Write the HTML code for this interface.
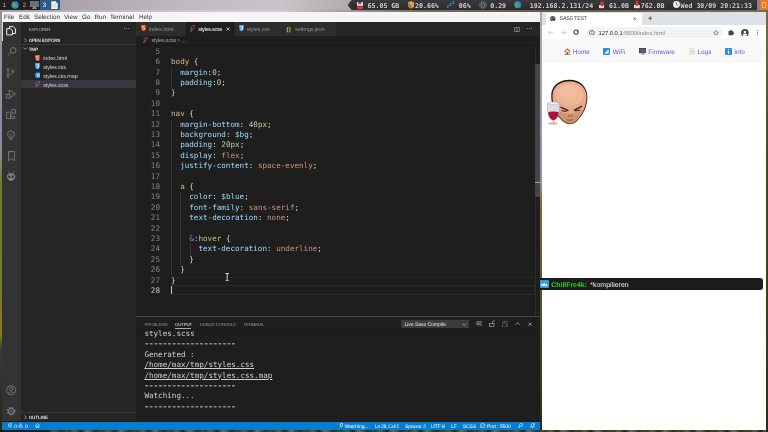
<!DOCTYPE html>
<html><head><meta charset="utf-8"><title>SASS TEST</title>
<style>
*{box-sizing:border-box;margin:0;padding:0}
html,body{text-rendering:geometricPrecision;width:768px;height:432px;overflow:hidden;background:#23260f;font-family:"Liberation Sans",sans-serif}
#root{position:absolute;left:0;top:0;width:768px;height:432px;overflow:hidden;will-change:transform}
.a{position:absolute}
.t{white-space:pre}
.m{font-family:"Liberation Mono",monospace}
.d{font-family:"DejaVu Sans Mono","Liberation Mono",monospace}
.b{font-weight:bold}
.ln{position:absolute;left:136px;width:404px;height:10.4px;line-height:10.4px;white-space:pre;font:7.6px "DejaVu Sans Mono","Liberation Mono",monospace;color:#d4d4d4}
.ln i{position:absolute;left:0;width:24px;text-align:right;color:#858585;font-style:normal;line-height:10.4px}
.ln b{position:absolute;left:35px;font-weight:normal;line-height:10.4px}
.sel{color:#d7ba7d}.pr{color:#9cdcfe}.nu{color:#b5cea8}.va{color:#ce9178}.kw{color:#569cd6}
#out,.ol{left:144.4px;font:7.6px "DejaVu Sans Mono","Liberation Mono",monospace;color:#d0d0d0;line-height:10.4px;white-space:pre}
#out u,.ol u{text-decoration:underline;text-underline-offset:1px;text-decoration-thickness:.6px}
</style></head><body>
<div id="root">
<div class="a" style="left:0px;top:0px;width:768px;height:432px;background:linear-gradient(180deg,#8d8590 0,#9a92a0 30px,#8f88a0 150px,#6f7a2e 185px,#7a7a28 300px,#8a7a22 335px,#3a3a34 350px,#2c2e22 400px,#23280f 432px);"></div>
<div class="a" style="left:0px;top:429.8px;width:768px;height:2.2px;background:linear-gradient(90deg,#15170c 0,#1c1f10 40px,rgba(0,0,0,0) 60px),repeating-linear-gradient(90deg,#333a22 0,#55603e 7px,#22281a 13px,#687254 19px,#2b3220 27px,#444c30 34px);"></div>
<div class="a" style="left:766px;top:11px;width:2px;height:421px;background:linear-gradient(180deg,#7a6a4a 0,#4a4a22 120px,#3a3c1c 300px,#2a2c14 421px);"></div>
<div class="a" style="left:0px;top:0px;width:768px;height:11.5px;background:linear-gradient(90deg,#9c929c 0,#aaa0aa 60px,#c2bac2 190px,#cac3c9 280px,#b2aaae 350px,#9a9298 768px);"></div>
<div class="a" style="left:0px;top:9.8px;width:768px;height:1.9px;background:linear-gradient(90deg,#a79da7 0,#b8aeb8 60px,#cfc8cf 190px,#d2ccd1 280px,#a09a98 350px,#7a6c5c 420px,#6a5a48 540px,#7a6a58 768px);"></div>
<div class="a" style="left:0px;top:0px;width:19.5px;height:9.6px;background:#1f1f21;"></div>
<span class="a t m" style="left:2.4px;top:-1px;font-size:6.6px;line-height:13.2px;color:#a8a8a8;">1</span>
<div class="a" style="left:20px;top:0px;width:19.5px;height:9.6px;background:#1f1f21;"></div>
<span class="a t m" style="left:22.4px;top:-1px;font-size:6.6px;line-height:13.2px;color:#a8a8a8;">2</span>
<div class="a" style="left:40px;top:0px;width:19.5px;height:9.6px;background:#2c5b8a;"></div>
<span class="a t m" style="left:42.4px;top:-1px;font-size:6.6px;line-height:13.2px;color:#f0f0f0;">3</span>
<svg class="a" style="left:10.5px;top:0.8px;" width="8" height="8" viewBox="0 0 8 8"><circle cx="4" cy="4" r="3.7" fill="#2f7fd0"/><path d="M2 1.5l2.5.5 1 2-1.5 1.5-1 2-1.5-2.5z" fill="#4fb04a"/><path d="M5.5 4.5l1.5.3-.6 1.8-1.2.4z" fill="#4fb04a"/></svg>
<svg class="a" style="left:30px;top:1px;" width="9" height="8" viewBox="0 0 9 8"><rect x=".5" y=".5" width="8" height="5.2" fill="#6a7076" stroke="#8a9096" stroke-width=".6"/><rect x="3.4" y="5.7" width="2.2" height="1.2" fill="#9a9a9a"/><rect x="2.2" y="6.8" width="4.6" height=".9" fill="#b0b0b0"/></svg>
<svg class="a" style="left:50.5px;top:0.8px;" width="7" height="8.4" viewBox="0 0 7 8.4"><path d="M.3.3h4.2l2.2 2.2v5.6H.3z" fill="#f4f4f0"/><path d="M4.5.3v2.2h2.2z" fill="#c9c9c0"/><path d="M1.3 3.6h4M1.3 4.8h4M1.3 6h4" stroke="#b8b8c8" stroke-width=".5"/></svg>
<div class="a" style="left:347.5px;top:0px;width:409.5px;height:10px;background:linear-gradient(180deg,#39383b,#2c2b2e);clip-path:polygon(4.2px 0,100% 0,100% 100%,4.2px 100%,0 50%)"></div>
<span class="a t d" style="left:367.5px;top:0px;font-size:6.6px;line-height:13.2px;color:#d2d2d2;font-weight:bold">65.05 GB</span>
<span class="a t d" style="left:415px;top:0px;font-size:6.6px;line-height:13.2px;color:#d2d2d2;font-weight:bold">20.66%</span>
<span class="a t d" style="left:458.7px;top:0px;font-size:6.6px;line-height:13.2px;color:#d2d2d2;font-weight:bold">06%</span>
<span class="a t d" style="left:490.2px;top:0px;font-size:6.6px;line-height:13.2px;color:#d2d2d2;font-weight:bold">0.29</span>
<span class="a t d" style="left:529.7px;top:0px;font-size:6.6px;line-height:13.2px;color:#d2d2d2;font-weight:bold">192.168.2.131/24</span>
<span class="a t d" style="left:609px;top:0px;font-size:6.6px;line-height:13.2px;color:#d2d2d2;font-weight:bold">61.0B</span>
<span class="a t d" style="left:640.7px;top:0px;font-size:6.6px;line-height:13.2px;color:#d2d2d2;font-weight:bold">762.0B</span>
<span class="a t d" style="left:680.5px;top:0px;font-size:6.6px;line-height:13.2px;color:#d2d2d2;font-weight:bold">Wed 30/09 20:21:33</span>
<svg class="a" style="left:356.7px;top:1.6px;" width="6" height="7" viewBox="0 0 6 7"><rect x="0" y="0" width="6" height="7" rx=".6" fill="#e8e8f0"/><rect x="0" y="3.6" width="6" height="3.4" fill="#d8304a"/><rect x="1.2" y="0" width="3.2" height="2.2" fill="#8a4a5a"/></svg>
<svg class="a" style="left:408px;top:1.4px;" width="6.4" height="7.4" viewBox="0 0 6.4 7.4"><path d="M3.2 0l3.2 1.6v4.2L3.2 7.4 0 5.8V1.6z" fill="#d89a54"/><path d="M3.2 3.2v4.2L0 5.8V1.6z" fill="#b87838"/><path d="M0 1.6l3.2 1.6 3.2-1.6" stroke="#f0c890" stroke-width=".5" fill="none"/></svg>
<span class="a t " style="left:446.4px;top:2px;font-size:5.6px;line-height:11.2px;color:#3f8ad8;font-weight:bold">z</span>
<span class="a t " style="left:449px;top:0px;font-size:5.6px;line-height:11.2px;color:#3f8ad8;font-weight:bold">z</span>
<span class="a t " style="left:451.8px;top:-2px;font-size:5.6px;line-height:11.2px;color:#3f8ad8;font-weight:bold">z</span>
<svg class="a" style="left:478.5px;top:1px;" width="8" height="8" viewBox="0 0 8 8"><circle cx="4" cy="4" r="3.100" fill="none" stroke="#6a7479" stroke-width="1.500" stroke-dasharray="1.200 .8"/><circle cx="4" cy="4" r="2.400" fill="#626c71"/><circle cx="4" cy="4" r="1" fill="#343336"/></svg>
<svg class="a" style="left:514px;top:1px;" width="7.4" height="7.4" viewBox="0 0 7.4 7.4"><circle cx="3.7" cy="3.7" r="3.6" fill="#2f7fd0"/><path d="M1.6 1.4l2.4.5 1 1.8-1.4 1.4-1 2-1.4-2.4z" fill="#4fb04a"/><path d="M5.2 4.2l1.4.3-.6 1.6-1.1.4z" fill="#4fb04a"/></svg>
<svg class="a" style="left:598.5px;top:1.4px;" width="5.8" height="7.2" viewBox="0 0 5.8 7.2"><rect x="0" y="4" width="5.8" height="3.2" fill="#e8d8d0"/><path d="M2.9 0l2.7 3H3.9v2.4H1.9V3H.2z" fill="#e03a2a"/></svg>
<svg class="a" style="left:634px;top:1.4px;" width="5.8" height="7.2" viewBox="0 0 5.8 7.2"><rect x="0" y="4" width="5.8" height="3.2" fill="#e8d8d0"/><path d="M2.9 5.4l2.7-3H3.9V0H1.9v2.4H.2z" fill="#e03a2a"/></svg>
<svg class="a" style="left:673px;top:1.3px;" width="7" height="7" viewBox="0 0 7 7"><circle cx="3.5" cy="3.5" r="3.4" fill="#f0f0f0"/><path d="M3.5 1.2v2.5l1.6.9" stroke="#555" stroke-width=".7" fill="none"/></svg>
<div class="a" style="left:757px;top:0px;width:3px;height:10px;background:#8a8288;"></div>
<div class="a" style="left:759.8px;top:0px;width:8.2px;height:10.4px;background:#e47a2c;"><div class='a' style='left:2.4px;top:2.2px;width:3.4px;height:5.4px;border:0.8px solid #f6b070'></div></div>
<div class="a" style="left:2px;top:11.7px;width:538.3px;height:10.5px;background:#f5f5f5;"></div>
<span class="a t " style="left:4px;top:12px;font-size:6.3px;line-height:12.6px;color:#303030;">File</span>
<span class="a t " style="left:19px;top:12px;font-size:6.3px;line-height:12.6px;color:#303030;">Edit</span>
<span class="a t " style="left:34px;top:12px;font-size:6.3px;line-height:12.6px;color:#303030;">Selection</span>
<span class="a t " style="left:64px;top:12px;font-size:6.3px;line-height:12.6px;color:#303030;">View</span>
<span class="a t " style="left:82px;top:12px;font-size:6.3px;line-height:12.6px;color:#303030;">Go</span>
<span class="a t " style="left:94.5px;top:12px;font-size:6.3px;line-height:12.6px;color:#303030;">Run</span>
<span class="a t " style="left:110px;top:12px;font-size:6.3px;line-height:12.6px;color:#303030;">Terminal</span>
<span class="a t " style="left:139px;top:12px;font-size:6.3px;line-height:12.6px;color:#303030;">Help</span>
<div class="a" style="left:2px;top:22px;width:538.3px;height:408px;background:#1e1e1e;"></div>
<div class="a" style="left:2px;top:22px;width:19px;height:399.3px;background:#333333;"></div>
<div class="a" style="left:2px;top:22px;width:1px;height:18.5px;background:#d8d8d8;"></div>
<div class="a" style="left:21px;top:22px;width:115px;height:399.3px;background:#252526;"></div>
<div class="a" style="left:136px;top:22px;width:404.3px;height:13.5px;background:#252526;"></div>
<span class="a t " style="left:28.7px;top:26px;font-size:4.4px;line-height:8.8px;color:#bdbdbd;letter-spacing:-.3px">EXPLORER</span>
<div class="a" style="left:123.6px;top:28.3px;width:1px;height:1px;background:#a0a0a0;border-radius:50%"></div>
<div class="a" style="left:125.69999999999999px;top:28.3px;width:1px;height:1px;background:#a0a0a0;border-radius:50%"></div>
<div class="a" style="left:127.8px;top:28.3px;width:1px;height:1px;background:#a0a0a0;border-radius:50%"></div>
<svg class="a" style="left:24px;top:37.8px;" width="3" height="4.6" viewBox="0 0 3 4.6"><path d="M.6.5l1.8 1.8L.6 4.1" stroke="#c5c5c5" stroke-width=".7" fill="none"/></svg>
<span class="a t " style="left:28.7px;top:36px;font-size:4.6px;line-height:9.2px;color:#dcdcdc;font-weight:bold;letter-spacing:-.27px">OPEN EDITORS</span>
<div class="a" style="left:21px;top:44.2px;width:115px;height:0.6px;background:#3a3a3c;"></div>
<svg class="a" style="left:23px;top:47.3px;" width="4.6" height="3.2" viewBox="0 0 4.6 3.2"><path d="M.5.6l1.8 1.8L4.1.6" stroke="#c5c5c5" stroke-width=".7" fill="none"/></svg>
<span class="a t " style="left:28.7px;top:45px;font-size:4.6px;line-height:9.2px;color:#dcdcdc;font-weight:bold;letter-spacing:-.15px">TMP</span>
<div class="a" style="left:21px;top:79.7px;width:115px;height:8px;background:#37373d;"></div>
<span class="a t " style="left:43.2px;top:54px;font-size:5.5px;line-height:11.0px;color:#d0d0d0;letter-spacing:-.12px">index.html</span>
<span class="a t " style="left:43.2px;top:63px;font-size:5.5px;line-height:11.0px;color:#d0d0d0;letter-spacing:-.12px">styles.css</span>
<span class="a t " style="left:43.2px;top:72px;font-size:5.5px;line-height:11.0px;color:#d0d0d0;letter-spacing:-.12px">styles.css.map</span>
<span class="a t " style="left:43.2px;top:81px;font-size:5.5px;line-height:11.0px;color:#d0d0d0;letter-spacing:-.12px">styles.scss</span>
<svg class="a" style="left:35px;top:54.6px;" width="5" height="6.2" viewBox="0 0 5 6.2"><path d="M0 0h5l-.5 5.2L2.5 6.2.5 5.2z" fill="#e44d26"/><path d="M1.3 1.3h2.4M1.3 1.3l.15 1.6h2.1l-.2 1.7-.85.3-.85-.3" stroke="#fff" stroke-width=".6" fill="none"/></svg>
<svg class="a" style="left:35px;top:63.4px;" width="5" height="6.2" viewBox="0 0 5 6.2"><path d="M0 0h5l-.5 5.2L2.5 6.2.5 5.2z" fill="#42a5f5"/><path d="M1.3 1.3h2.4l-.2 3.3-1 .4-1-.4M1.4 2.9h2.1" stroke="#fff" stroke-width=".6" fill="none"/></svg>
<svg class="a" style="left:34.6px;top:72.2px;" width="5.8" height="6.4" viewBox="0 0 5.8 6.4"><circle cx="2.9" cy="3.2" r="2.9" fill="#3f8fd8"/><rect x="2" y="1.6" width="2.6" height="3.2" fill="#9ad0ff"/></svg>
<svg class="a" style="left:34.8px;top:80.6px;" width="5.6" height="6.6" viewBox="0 0 5.6 6.6"><path d="M1.6 4.2C.2 2.8 2.2.6 4 .5c1.4-.1 1.5 1.2.6 2.2-.9 1-2.2 1.3-2.6 2.2-.4.9-.2 1.6-1 1.5-.8-.1-.4-1.4.6-2.2z" stroke="#ec5f93" stroke-width=".7" fill="none"/></svg>
<div class="a" style="left:21px;top:412.3px;width:115px;height:0.6px;background:#3a3a3c;"></div>
<svg class="a" style="left:24px;top:415.2px;" width="3" height="4.6" viewBox="0 0 3 4.6"><path d="M.6.5l1.8 1.8L.6 4.1" stroke="#c5c5c5" stroke-width=".7" fill="none"/></svg>
<span class="a t " style="left:28.7px;top:413px;font-size:4.6px;line-height:9.2px;color:#dcdcdc;font-weight:bold;letter-spacing:-.15px">OUTLINE</span>
<svg class="a" style="left:6.2px;top:26.2px;" width="10.2" height="9.6" viewBox="0 0 10.2 9.6"><path d="M3.4 2.2V.6h3.8l2.3 2.3v4.6H6.6" stroke="#fff" stroke-width=".9" fill="none"/><path d="M.7 2.6h3.6l2.2 2.2v4.1H.7z" stroke="#fff" stroke-width=".9" fill="none"/></svg>
<svg class="a" style="left:6.6px;top:47.3px;" width="10" height="9.4" viewBox="0 0 10 9.4"><circle cx="6.2" cy="3.4" r="2.8" stroke="#808080" stroke-width=".9" fill="none"/><path d="M4.2 5.5L.6 8.9" stroke="#808080" stroke-width=".9"/></svg>
<svg class="a" style="left:6.4px;top:67.8px;" width="9" height="10.2" viewBox="0 0 9 10.2"><circle cx="2" cy="1.6" r="1.1" stroke="#808080" stroke-width=".8" fill="none"/><circle cx="2" cy="8.4" r="1.1" stroke="#808080" stroke-width=".8" fill="none"/><circle cx="7" cy="3.2" r="1.1" stroke="#808080" stroke-width=".8" fill="none"/><path d="M2 2.7v4.6M7 4.3C7 6 2.6 5.8 2.2 7.3" stroke="#808080" stroke-width=".8" fill="none"/></svg>
<svg class="a" style="left:6px;top:88.8px;" width="10.4" height="10" viewBox="0 0 10.4 10"><path d="M3.2 1l6.2 4-6.2 4z" stroke="#808080" stroke-width=".85" fill="none"/><rect x=".6" y="5.6" width="3.4" height="3.4" fill="#333" stroke="#808080" stroke-width=".8"/></svg>
<svg class="a" style="left:6px;top:109.4px;" width="10.4" height="10" viewBox="0 0 10.4 10"><path d="M.6 3.2h4v4h4v2.3H.6zM4.6 5.2V9.5" stroke="#808080" stroke-width=".8" fill="none"/><path d="M.6 6.4h8" stroke="#808080" stroke-width=".0" fill="none"/><rect x="6" y=".6" width="3.6" height="3.6" stroke="#808080" stroke-width=".8" fill="none"/></svg>
<svg class="a" style="left:6.4px;top:130px;" width="10" height="10" viewBox="0 0 10 10"><circle cx="5" cy="4.2" r="3.4" stroke="#808080" stroke-width=".8" fill="none"/><path d="M3.5 4.2l1.1 1.1 2-2.1M5 7.6v1.6M3.4 9.3h3.2" stroke="#808080" stroke-width=".8" fill="none"/></svg>
<svg class="a" style="left:7.6px;top:150.6px;" width="7.6" height="10.6" viewBox="0 0 7.6 10.6"><path d="M.6.6h6.2v9.2L3.7 7.4.6 9.8z" stroke="#808080" stroke-width=".9" fill="none"/></svg>
<svg class="a" style="left:6.4px;top:171.4px;" width="10" height="10.4" viewBox="0 0 10 10.4"><path d="M5 2.2c2.6 0 4.2 1.4 4.2 3.4S7 10 5 10 .8 7.600.8 5.600 2.400 2.200 5 2.200z" fill="#808080"/><ellipse cx="3.3" cy="5.800" rx="1.100" ry="1.500" fill="#333" transform="rotate(-25 3.300 5.800)"/><ellipse cx="6.700" cy="5.800" rx="1.100" ry="1.500" fill="#333" transform="rotate(25 6.700 5.800)"/><path d="M3.200 2.400L2.200.5M6.800 2.400L7.800.5" stroke="#808080" stroke-width=".7"/></svg>
<svg class="a" style="left:6.2px;top:385.4px;" width="10.4" height="10.4" viewBox="0 0 10.4 10.4"><circle cx="5.2" cy="5.2" r="4.6" stroke="#808080" stroke-width=".8" fill="none"/><circle cx="5.2" cy="3.900" r="1.700" stroke="#808080" stroke-width=".8" fill="none"/><path d="M2.100 8.500c.6-2 5.600-2 6.200 0" stroke="#808080" stroke-width=".8" fill="none"/></svg>
<svg class="a" style="left:6.2px;top:406.2px;" width="10.4" height="10.4" viewBox="0 0 10.4 10.4"><circle cx="5.2" cy="5.2" r="3.400" stroke="#808080" stroke-width="1.800" stroke-dasharray="1.500 1.170" fill="none"/><circle cx="5.2" cy="5.2" r="2.900" stroke="#808080" stroke-width=".8" fill="none"/><circle cx="5.2" cy="5.2" r="1.200" stroke="#808080" stroke-width=".7" fill="none"/></svg>
<div class="a" style="left:136px;top:22px;width:49px;height:13.5px;background:#2d2d2d;"></div>
<div class="a" style="left:185.3px;top:22px;width:48.7px;height:13.8px;background:#1e1e1e;"></div>
<div class="a" style="left:234.3px;top:22px;width:101.5px;height:13.5px;background:#2d2d2d;"></div>
<div class="a" style="left:185px;top:22px;width:0.5px;height:13.5px;background:#252526;"></div>
<div class="a" style="left:234px;top:22px;width:0.5px;height:13.5px;background:#252526;"></div>
<div class="a" style="left:282px;top:22px;width:0.5px;height:13.5px;background:#262626;"></div>
<svg class="a" style="left:141px;top:25.3px;" width="5" height="6.2" viewBox="0 0 5 6.2"><path d="M0 0h5l-.5 5.2L2.5 6.2.5 5.2z" fill="#e44d26"/><path d="M1.3 1.3h2.4M1.3 1.3l.15 1.6h2.1l-.2 1.7-.85.3-.85-.3" stroke="#fff" stroke-width=".6" fill="none"/></svg>
<span class="a t " style="left:149px;top:25px;font-size:5.6px;line-height:11.2px;color:#8f8f8f;letter-spacing:-.12px">index.html</span>
<svg class="a" style="left:189.6px;top:25.3px;" width="5.6" height="6.6" viewBox="0 0 5.6 6.6"><path d="M1.6 4.2C.2 2.8 2.2.6 4 .5c1.4-.1 1.5 1.2.6 2.2-.9 1-2.2 1.3-2.6 2.2-.4.9-.2 1.6-1 1.5-.8-.1-.4-1.4.6-2.2z" stroke="#ec5f93" stroke-width=".7" fill="none"/></svg>
<span class="a t " style="left:198.2px;top:25px;font-size:5.6px;line-height:11.2px;color:#ffffff;letter-spacing:-.3px">styles.scss</span>
<svg class="a" style="left:225.8px;top:27px;" width="4" height="4" viewBox="0 0 4 4"><path d="M.4.4l3.200 3.200M3.600.4L.4 3.600" stroke="#e8e8e8" stroke-width=".7"/></svg>
<svg class="a" style="left:239px;top:25.3px;" width="5" height="6.2" viewBox="0 0 5 6.2"><path d="M0 0h5l-.5 5.2L2.5 6.2.5 5.2z" fill="#42a5f5"/><path d="M1.3 1.3h2.4l-.2 3.3-1 .4-1-.4M1.4 2.9h2.1" stroke="#fff" stroke-width=".6" fill="none"/></svg>
<span class="a t " style="left:246.7px;top:25px;font-size:5.6px;line-height:11.2px;color:#8f8f8f;letter-spacing:-.12px">styles.css</span>
<span class="a t " style="left:286.2px;top:25px;font-size:5.6px;line-height:11.2px;color:#cbcb41;font-weight:bold;letter-spacing:.3px">{}</span>
<span class="a t " style="left:295px;top:25px;font-size:5.6px;line-height:11.2px;color:#8f8f8f;letter-spacing:-.12px">settings.json</span>
<svg class="a" style="left:514.4px;top:26.6px;" width="6" height="5" viewBox="0 0 6 5"><rect x=".4" y=".4" width="5.200" height="4.200" rx=".5" stroke="#b0b0b0" stroke-width=".6" fill="none"/><path d="M3 .4v4.200" stroke="#b0b0b0" stroke-width=".6"/></svg>
<div class="a" style="left:526.8px;top:28.4px;width:1px;height:1px;background:#a0a0a0;border-radius:50%"></div>
<div class="a" style="left:529.0px;top:28.4px;width:1px;height:1px;background:#a0a0a0;border-radius:50%"></div>
<div class="a" style="left:531.1999999999999px;top:28.4px;width:1px;height:1px;background:#a0a0a0;border-radius:50%"></div>
<svg class="a" style="left:143px;top:37px;" width="5.04" height="5.9399999999999995" viewBox="0 0 5.6 6.6"><path d="M1.6 4.2C.2 2.8 2.2.6 4 .5c1.4-.1 1.5 1.2.6 2.2-.9 1-2.2 1.3-2.6 2.2-.4.9-.2 1.6-1 1.5-.8-.1-.4-1.4.6-2.2z" stroke="#ec5f93" stroke-width=".7" fill="none"/></svg>
<span class="a t " style="left:151.5px;top:36px;font-size:5.5px;line-height:11.0px;color:#a8a8a8;letter-spacing:-.18px">styles.scss</span>
<span class="a t " style="left:177.6px;top:34px;font-size:6.5px;line-height:13.0px;color:#a8a8a8;">›</span>
<span class="a t " style="left:181.4px;top:36px;font-size:5.5px;line-height:11.0px;color:#a8a8a8;letter-spacing:-.1px">...</span>
<div class="a" style="left:136px;top:45px;width:404.3px;height:1.2px;background:linear-gradient(180deg,#121212,#1e1e1e);"></div>
<div class="a" style="left:171.3px;top:67.6px;width:0.7px;height:20.8px;background:#363636;"></div>
<div class="a" style="left:171.3px;top:119.6px;width:0.7px;height:156.0px;background:#363636;"></div>
<div class="a" style="left:180.4px;top:192.39999999999998px;width:0.7px;height:72.8px;background:#363636;"></div>
<div class="a" style="left:189.6px;top:244.39999999999998px;width:0.7px;height:10.4px;background:#363636;"></div>
<div class="a" style="left:170.5px;top:285.2px;width:364px;height:9.8px;background:transparent;border:.6px solid #292929"></div>
<div class="a" style="left:170.5px;top:276.8px;width:364px;height:0.6px;background:#252525;"></div>
<div class="a" style="left:171px;top:286px;width:0.9px;height:8.4px;background:#c8c8c8;"></div>
<div class="ln" style="top:46.8px"><i>5</i><b></b></div>
<div class="ln" style="top:57.2px"><i>6</i><b><span class=sel>body</span> {</b></div>
<div class="ln" style="top:67.6px"><i>7</i><b>  <span class=pr>margin</span>:<span class=nu>0</span>;</b></div>
<div class="ln" style="top:78.0px"><i>8</i><b>  <span class=pr>padding</span>:<span class=nu>0</span>;</b></div>
<div class="ln" style="top:88.4px"><i>9</i><b>}</b></div>
<div class="ln" style="top:98.8px"><i>10</i><b></b></div>
<div class="ln" style="top:109.2px"><i>11</i><b><span class=sel>nav</span> {</b></div>
<div class="ln" style="top:119.6px"><i>12</i><b>  <span class=pr>margin-bottom</span>: <span class=nu>40px</span>;</b></div>
<div class="ln" style="top:130.0px"><i>13</i><b>  <span class=pr>background</span>: <span class=pr>$bg</span>;</b></div>
<div class="ln" style="top:140.4px"><i>14</i><b>  <span class=pr>padding</span>: <span class=nu>20px</span>;</b></div>
<div class="ln" style="top:150.8px"><i>15</i><b>  <span class=pr>display</span>: <span class=va>flex</span>;</b></div>
<div class="ln" style="top:161.2px"><i>16</i><b>  <span class=pr>justify-content</span>: <span class=va>space-evenly</span>;</b></div>
<div class="ln" style="top:171.6px"><i>17</i><b></b></div>
<div class="ln" style="top:182.0px"><i>18</i><b>  <span class=sel>a</span> {</b></div>
<div class="ln" style="top:192.4px"><i>19</i><b>    <span class=pr>color</span>: <span class=pr>$blue</span>;</b></div>
<div class="ln" style="top:202.8px"><i>20</i><b>    <span class=pr>font-family</span>: <span class=va>sans-serif</span>;</b></div>
<div class="ln" style="top:213.2px"><i>21</i><b>    <span class=pr>text-decoration</span>: <span class=va>none</span>;</b></div>
<div class="ln" style="top:223.6px"><i>22</i><b></b></div>
<div class="ln" style="top:234.0px"><i>23</i><b>    <span class=kw>&amp;</span><span class=sel>:hover</span> {</b></div>
<div class="ln" style="top:244.4px"><i>24</i><b>      <span class=pr>text-decoration</span>: <span class=va>underline</span>;</b></div>
<div class="ln" style="top:254.8px"><i>25</i><b>    }</b></div>
<div class="ln" style="top:265.2px"><i>26</i><b>  }</b></div>
<div class="ln" style="top:275.6px"><i>27</i><b>}</b></div>
<div class="ln" style="top:286.0px"><i style=color:#c6c6c6>28</i><b></b></div>
<div class="a" style="left:534.6px;top:46px;width:0.5px;height:270px;background:#2b2b2b;"></div>
<div class="a" style="left:535px;top:64.2px;width:5.3px;height:133.3px;background:#454545;"></div>
<div class="a" style="left:535px;top:182.2px;width:5.3px;height:0.7px;background:#a8a8a8;"></div>
<svg class="a" style="left:224.6px;top:273px;" width="4.4" height="8.4" viewBox="0 0 4.4 8.4"><path d="M.4.5h3.600M.4 7.900h3.600M2.200.5v7.400" stroke="#e8e8e8" stroke-width=".9" fill="none"/></svg>
<div class="a" style="left:136px;top:316.2px;width:404.3px;height:0.7px;background:#454545;"></div>
<span class="a t " style="left:144.4px;top:321px;font-size:4.4px;line-height:8.8px;color:#949494;letter-spacing:-.17px">PROBLEMS</span>
<span class="a t " style="left:175px;top:321px;font-size:4.4px;line-height:8.8px;color:#ececec;letter-spacing:-.17px">OUTPUT</span>
<span class="a t " style="left:200px;top:321px;font-size:4.4px;line-height:8.8px;color:#949494;letter-spacing:-.17px">DEBUG CONSOLE</span>
<span class="a t " style="left:243.4px;top:321px;font-size:4.4px;line-height:8.8px;color:#949494;letter-spacing:-.17px">TERMINAL</span>
<div class="a" style="left:175px;top:328px;width:16.3px;height:0.6px;background:#b0b0b0;"></div>
<div class="a" style="left:136px;top:329.4px;width:404.3px;height:1px;background:linear-gradient(180deg,#141414,#1e1e1e);"></div>
<div class="a ol" style="top:328.9px">styles.scss</div>
<div class="a ol" style="top:339.3px;color:#b2b2b2;font-weight:bold;letter-spacing:-.7px;transform:scaleX(1.1806);transform-origin:0 0">--------------------</div>
<div class="a ol" style="top:349.7px">Generated :</div>
<div class="a ol" style="top:360.1px"><u>/home/max/tmp/styles.css</u></div>
<div class="a ol" style="top:370.5px"><u>/home/max/tmp/styles.css.map</u></div>
<div class="a ol" style="top:380.9px;color:#b2b2b2;font-weight:bold;letter-spacing:-.7px;transform:scaleX(1.1806);transform-origin:0 0">--------------------</div>
<div class="a ol" style="top:391.3px">Watching...</div>
<div class="a ol" style="top:401.7px;color:#b2b2b2;font-weight:bold;letter-spacing:-.7px;transform:scaleX(1.1806);transform-origin:0 0">--------------------</div>
<div class="a" style="left:400.8px;top:319.9px;width:68.5px;height:8.2px;background:#3c3c3c;"></div>
<span class="a t " style="left:404.5px;top:320px;font-size:5.2px;line-height:10.4px;color:#e8e8e8;letter-spacing:-.1px">Live Sass Compile</span>
<svg class="a" style="left:462px;top:322.5px;" width="4.6" height="3.2" viewBox="0 0 4.6 3.2"><path d="M.5.6l1.800 1.800L4.100.6" stroke="#c5c5c5" stroke-width=".7" fill="none"/></svg>
<svg class="a" style="left:475.8px;top:321.4px;" width="6" height="5.4" viewBox="0 0 6 5.4"><path d="M.3.800h5.400M.3 2.300h5.400M.3 3.800h3.400" stroke="#b8b8b8" stroke-width=".7"/><path d="M4.300 3.400l1.400 1.400M5.700 3.400L4.300 4.800" stroke="#b8b8b8" stroke-width=".5"/></svg>
<svg class="a" style="left:488.6px;top:320.4px;" width="6.4" height="7.2" viewBox="0 0 6.4 7.2"><rect x=".4" y="3.400" width="4.600" height="3.300" stroke="#b8b8b8" stroke-width=".6" fill="none"/><path d="M3.700 3.400V1.900c0-1.800 2.200-1.800 2.200-.2" stroke="#b8b8b8" stroke-width=".6" fill="none"/></svg>
<svg class="a" style="left:501.6px;top:320.8px;" width="6.4" height="6.6" viewBox="0 0 6.4 6.6"><path d="M1.800 1.800V.5h3L6 1.700V5H4.600M.5 1.800h3l1.100 1.200v3.100H.5z" stroke="#6a6a6a" stroke-width=".7" fill="none"/></svg>
<svg class="a" style="left:515px;top:322.4px;" width="5.2" height="3.4" viewBox="0 0 5.2 3.4"><path d="M.5 2.800l2.100-2.100 2.100 2.100" stroke="#b8b8b8" stroke-width=".7" fill="none"/></svg>
<svg class="a" style="left:528px;top:322px;" width="4.4" height="4.4" viewBox="0 0 4.4 4.4"><path d="M.5.5l3.400 3.400M3.900.5L.5 3.900" stroke="#b8b8b8" stroke-width=".7" fill="none"/></svg>
<div class="a" style="left:2px;top:421.5px;width:538.3px;height:8.2px;background:#047ccf;"></div>
<svg class="a" style="left:7.8px;top:423.4px;" width="4.6" height="4.6" viewBox="0 0 4.6 4.6"><circle cx="2.300" cy="2.300" r="1.950" stroke="#fff" stroke-width=".55" fill="none"/><path d="M1.400 1.400l1.800 1.800M3.200 1.400L1.400 3.200" stroke="#fff" stroke-width=".5"/></svg>
<span class="a t " style="left:14.2px;top:422px;font-size:5.1px;line-height:10.2px;color:#ffffff;">0</span>
<svg class="a" style="left:18.3px;top:423.3px;" width="5" height="4.6" viewBox="0 0 5 4.6"><path d="M2.500.5L4.600 4.200H.4z" stroke="#fff" stroke-width=".55" fill="none"/><path d="M2.500 1.900v1.200" stroke="#fff" stroke-width=".5"/></svg>
<span class="a t " style="left:25px;top:422px;font-size:5.1px;line-height:10.2px;color:#ffffff;">0</span>
<svg class="a" style="left:35px;top:423.2px;" width="5" height="4.8" viewBox="0 0 5 4.8"><path d="M.4 2.600L2.500.5l2.100 2.100M1 2.200v2.200h3V2.200M2 4.400V3.200h1v1.200" stroke="#fff" stroke-width=".55" fill="none"/></svg>
<svg class="a" style="left:338.6px;top:423.3px;" width="4.6" height="4.8" viewBox="0 0 4.6 4.8"><circle cx="2.600" cy="2" r="1.300" stroke="#fff" stroke-width=".55" fill="none"/><path d="M.4 1.400c.8-1.500 3.600-1.500 4.200 0M1.600 3.200L.6 4.600M2.600 3.400v1.200" stroke="#fff" stroke-width=".5" fill="none"/></svg>
<span class="a t " style="left:344.4px;top:422px;font-size:5.1px;line-height:10.2px;color:#ffffff;letter-spacing:-.13px;word-spacing:-.5px">Watching...</span>
<span class="a t " style="left:374.7px;top:422px;font-size:5.1px;line-height:10.2px;color:#ffffff;letter-spacing:-.13px;word-spacing:-.5px">Ln 28, Col 1</span>
<span class="a t " style="left:405px;top:422px;font-size:5.1px;line-height:10.2px;color:#ffffff;letter-spacing:-.13px;word-spacing:-.5px">Spaces: 2</span>
<span class="a t " style="left:431px;top:422px;font-size:5.1px;line-height:10.2px;color:#ffffff;letter-spacing:-.13px;word-spacing:-.5px">UTF-8</span>
<span class="a t " style="left:451px;top:422px;font-size:5.1px;line-height:10.2px;color:#ffffff;letter-spacing:-.13px;word-spacing:-.5px">LF</span>
<span class="a t " style="left:462.8px;top:422px;font-size:5.1px;line-height:10.2px;color:#ffffff;letter-spacing:-.13px;word-spacing:-.5px">SCSS</span>
<span class="a t " style="left:487px;top:422px;font-size:5.1px;line-height:10.2px;color:#ffffff;letter-spacing:-.13px;word-spacing:.1px">Port : 5500</span>
<svg class="a" style="left:480.4px;top:423px;" width="5.4" height="5.4" viewBox="0 0 5.4 5.4"><circle cx="2.700" cy="2.700" r="2.300" stroke="#fff" stroke-width=".6" fill="none"/><path d="M1.100 4.300L4.300 1.100" stroke="#fff" stroke-width=".55"/></svg>
<svg class="a" style="left:517.6px;top:423.2px;" width="5" height="4.8" viewBox="0 0 5 4.8"><circle cx="3" cy="1.900" r="1.500" stroke="#fff" stroke-width=".55" fill="none"/><path d="M2 3L.5 4.500M.5 3.300v1.200h1.200" stroke="#fff" stroke-width=".5" fill="none"/></svg>
<svg class="a" style="left:529.8px;top:423.1px;" width="5" height="5" viewBox="0 0 5 5"><path d="M.6 3.900h3.800l-.6-.8V2c0-2-2.600-2-2.600 0v1.100zM2 4.500h1" stroke="#fff" stroke-width=".55" fill="none"/><circle cx="4" cy="1" r=".8" fill="#fff"/></svg>
<div class="a" style="left:540.3px;top:11.7px;width:1.5px;height:418.3px;background:linear-gradient(180deg,#b0aab8 0,#8a90b0 170px,#8a6a3a 190px,#5a4a2a 300px,#2a2c14 418px);"></div>
<div class="a" style="left:541.7px;top:11.7px;width:224.5px;height:418.3px;background:#ffffff;"></div>
<div class="a" style="left:541.7px;top:11.7px;width:224.5px;height:13px;background:#dee1e6;"></div>
<div class="a" style="left:545.5px;top:12.6px;width:96px;height:12.2px;background:#ffffff;border-radius:2.500px 2.500px 0 0"></div>
<svg class="a" style="left:550.4px;top:15.6px;" width="5.6" height="5.6" viewBox="0 0 5.6 5.6"><circle cx="2.800" cy="2.800" r="2.700" fill="#3f4246"/><path d="M1 1.800c1 .2 1.200 1 .6 1.600 1 .2 1 1.200 1.600 1.600M3.200.4c-.4.800.4 1.200 1 1 .4.400.2 1.200 1 1.400" stroke="#fff" stroke-width=".5" fill="none"/></svg>
<span class="a t " style="left:559.6px;top:14px;font-size:5.3px;line-height:10.6px;color:#3f4246;letter-spacing:-.2px">SASS TEST</span>
<svg class="a" style="left:633px;top:16.7px;" width="3.4" height="3.4" viewBox="0 0 3.4 3.4"><path d="M.3.300l2.800 2.800M3.100.3L.3 3.100" stroke="#3c4043" stroke-width=".6"/></svg>
<svg class="a" style="left:647.8px;top:16.1px;" width="4.6" height="4.6" viewBox="0 0 4.6 4.6"><path d="M2.300.2v4.200M.2 2.300h4.200" stroke="#3c4043" stroke-width=".75"/></svg>
<svg class="a" style="left:548px;top:29.8px;" width="5.4" height="5.4" viewBox="0 0 5.4 5.4"><path d="M5.200 2.700H.8M2.800.6L.7 2.700l2.100 2.100" stroke="#b4b7bb" stroke-width=".7" fill="none"/></svg>
<svg class="a" style="left:560.8px;top:29.8px;" width="5.4" height="5.4" viewBox="0 0 5.4 5.4"><path d="M.2 2.700h4.400M2.600.6l2.100 2.100-2.100 2.100" stroke="#b4b7bb" stroke-width=".7" fill="none"/></svg>
<svg class="a" style="left:573.2px;top:29.4px;" width="6.2" height="6.2" viewBox="0 0 6.2 6.2"><path d="M5.300 3.100a2.200 2.200 0 1 1-.7-1.600" stroke="#3a3d41" stroke-width="1.050" fill="none"/><path d="M5.700.4v2.300H3.400z" fill="#3a3d41"/></svg>
<div class="a" style="left:585.5px;top:27.2px;width:137px;height:10.8px;background:#f1f3f4;border-radius:5.400px"></div>
<svg class="a" style="left:588.8px;top:29.7px;" width="5.8" height="5.8" viewBox="0 0 5.8 5.8"><circle cx="2.900" cy="2.900" r="2.450" stroke="#4a4d52" stroke-width=".75" fill="none"/><path d="M2.900 2.600v1.700M2.900 1.400v.7" stroke="#4a4d52" stroke-width=".75"/></svg>
<span class="a t " style="left:598.6px;top:29px;font-size:5.75px;line-height:11.5px;color:#27292c;">127.0.0.1<span style="color:#7a8085">:5500/index.html</span></span>
<svg class="a" style="left:713.2px;top:29.7px;" width="5.8" height="5.6" viewBox="0 0 5.8 5.6"><path d="M2.900.5l.75 1.600 1.750.2-1.300 1.200.35 1.700-1.550-.9-1.550.9.350-1.700L.4 2.300l1.750-.2z" stroke="#5f6368" stroke-width=".6" fill="none"/></svg>
<svg class="a" style="left:728.3px;top:29.4px;" width="6.6" height="6.4" viewBox="0 0 6.6 6.4"><path d="M.5 2h1.600C1.600.2 4 .2 3.600 2h1.600v1.500c1.700-.5 1.700 1.900 0 1.400V6.200H.5z" fill="#45484c"/></svg>
<svg class="a" style="left:740.8px;top:28.7px;" width="7.8" height="7.8" viewBox="0 0 7.8 7.8"><circle cx="3.900" cy="3.900" r="3.800" fill="#3c4043"/><circle cx="3.900" cy="2.900" r="1.250" fill="#fff"/><path d="M1.500 6c.7-1.900 4.100-1.900 4.800 0-1.200 1.200-3.600 1.200-4.800 0z" fill="#fff"/></svg>
<div class="a" style="left:757.3px;top:30.1px;width:1px;height:1px;background:#45484c;border-radius:50%"></div>
<div class="a" style="left:757.3px;top:32.1px;width:1px;height:1px;background:#45484c;border-radius:50%"></div>
<div class="a" style="left:757.3px;top:34.1px;width:1px;height:1px;background:#45484c;border-radius:50%"></div>
<div class="a" style="left:541.7px;top:38.8px;width:224.5px;height:24.2px;background:#f8f8f8;"></div>
<span class="a t " style="left:572.7px;top:47px;font-size:6.4px;line-height:12.8px;color:#5f59e2;">Home</span>
<span class="a t " style="left:612.7px;top:47px;font-size:6.4px;line-height:12.8px;color:#5f59e2;">WiFi</span>
<span class="a t " style="left:648.3px;top:47px;font-size:6.4px;line-height:12.8px;color:#5f59e2;">Firmware</span>
<span class="a t " style="left:697.5px;top:47px;font-size:6.4px;line-height:12.8px;color:#5f59e2;">Logs</span>
<span class="a t " style="left:734.2px;top:47px;font-size:6.4px;line-height:12.8px;color:#5f59e2;">Info</span>
<svg class="a" style="left:563.8px;top:48.2px;" width="6.8" height="7" viewBox="0 0 6.8 7"><path d="M1.100 3.200h4.600v3.400H1.100z" fill="#e4d2b4" stroke="#a08868" stroke-width=".3"/><path d="M3.400.3L.1 3.400h1L3.400 1.400l2.300 2h1z" fill="#d8352a"/><rect x="2.800" y="4.400" width="1.200" height="2.200" fill="#7a4a2a"/><rect x="1.500" y="3.900" width=".9" height=".9" fill="#6aa0d8"/><rect x="4.400" y="3.900" width=".9" height=".9" fill="#6aa0d8"/><rect x=".4" y="6.300" width="6" height=".7" fill="#5aa03a"/></svg>
<svg class="a" style="left:603.3px;top:48.3px;" width="7" height="7" viewBox="0 0 7 7"><rect x="0" y="0" width="7" height="7" rx=".8" fill="#2f8fe0"/><path d="M1.400 5.600L5.600 1.400v4.200z" fill="#fff"/></svg>
<svg class="a" style="left:638.8px;top:47.9px;" width="7.6" height="7.4" viewBox="0 0 7.6 7.4"><rect x="0" y="0" width="7.600" height="5.200" fill="#3a4248"/><rect x=".7" y=".7" width="6.200" height="3.800" fill="#55626a"/><rect x="3" y="5.200" width="1.600" height="1.200" fill="#888"/><rect x="1.800" y="6.300" width="4" height=".9" fill="#aaa"/></svg>
<svg class="a" style="left:688.7px;top:48.3px;" width="6.8" height="7" viewBox="0 0 6.8 7"><path d="M.6.300h3.600l1.400 1.400v5H.6z" fill="#f2f2ee" stroke="#c8c8c0" stroke-width=".4"/><path d="M1.400 2.400h2.800M1.400 3.600h2.800M1.400 4.800h2" stroke="#b0b0c0" stroke-width=".4"/><path d="M3.600 5l2.800-2.600.5.600-2.800 2.500z" fill="#e8b840"/></svg>
<svg class="a" style="left:725px;top:48.3px;" width="7" height="7" viewBox="0 0 7 7"><rect x="0" y="0" width="7" height="7" rx=".8" fill="#2f8fe0"/><path d="M3.500 1.200v1M3.500 3v2.800" stroke="#fff" stroke-width="1.100"/></svg>
<svg class="a" style="left:547px;top:79px;" width="42" height="49" viewBox="0 0 42 49"><defs><linearGradient id="hg" x1="0" y1="0" x2="0" y2="1"><stop offset="0" stop-color="#1c110d"/><stop offset=".55" stop-color="#3a221a"/><stop offset="1" stop-color="#8a5a46"/></linearGradient></defs>
<path d="M22.300.7C33.500.7 40.400 8 40.400 18c0 9-4.200 18-10.200 24-3 3-7.400 4-10.600 2.700C13.600 42 8.600 35 6.200 28 4 22 3.900 16 4.700 12.500 6.600 5 14 .7 22.300.7z" fill="url(#hg)"/>
<path d="M22.300 2.300c10.400 0 17.200 6.500 17.200 15.700 0 8.600-4 17-9.700 22.800-2.800 2.800-6.800 3.600-9.600 2.500C14.400 40.800 9.800 34.200 7.400 27.500 5.300 21.800 5.200 16.400 6 13 7.800 6.300 14.700 2.300 22.300 2.300z" fill="#e7aa89"/>
<ellipse cx="22.500" cy="15.500" rx="14" ry="11" fill="#edb695"/>
<ellipse cx="21" cy="13" rx="9" ry="6.500" fill="#f1bd9e"/>
<path d="M8.300 29.500c2.200 6 6.500 11.600 11.800 13.800 2.800 1.100 6.800.3 9.600-2.500 3-3.200 5.700-7.200 7.400-11.600-3.600 3.600-8.700 5.400-14.500 5.400-5.600 0-10.800-1.700-14.300-5.100z" fill="#d29473"/>
<path d="M13.500 28.200l8 3.400M35 27.200l-8 4.200" stroke="#3a2018" stroke-width="1.400" fill="none"/>
<path d="M14.500 31.600q2.800 1.300 5.600.1M27.500 31.400q2.800 1 5.600-.7" stroke="#3c2219" stroke-width="1.100" fill="none"/>
<path d="M21 36.600q2.200 1.300 4.600 0" stroke="#8a553f" stroke-width=".9" fill="none"/>
<path d="M19.500 40.800q3.200 1.100 6.800-.2" stroke="#9a4a3c" stroke-width="1" fill="none"/>
<path d="M.6 24.200c-.8 6 .2 15.500 5.800 17.200 5.600-1.700 6.600-11.200 5.800-17.200z" fill="#dcdbe6" stroke="#aaa8b8" stroke-width=".6"/>
<path d="M1.100 33.500c.5 4 2 7 5.300 7.800 3.300-.8 4.800-3.800 5.300-7.800-2.200-1.200-8.400-1.200-10.600 0z" fill="#b01040"/>
<ellipse cx="6.400" cy="24.300" rx="5.700" ry="1.200" fill="#f4f3f7" stroke="#aaa8b8" stroke-width=".5"/>
<path d="M6.400 41.300v2.600" stroke="#d8a898" stroke-width="1.300"/>
<ellipse cx="5.800" cy="44.400" rx="4.800" ry="1" fill="#e2a88e"/></svg>
<div class="a" style="left:539.7px;top:277.9px;width:223.1px;height:12.3px;background:#1c1c1c;border-radius:0 3px 3px 0"></div>
<div class="a" style="left:540.4px;top:279.8px;width:8.3px;height:8.4px;background:#2a9fe0;border-radius:1px"></div>
<svg class="a" style="left:541.3px;top:281.6px;" width="6.4" height="4.8" viewBox="0 0 6.4 4.8"><path d="M.3 4.500V1.300l1.500 1.400L3.200.4l1.400 2.300 1.500-1.400v3.200z" fill="#fff"/></svg>
<span class="a t " style="left:551.3px;top:279px;font-size:6.9px;line-height:13.8px;color:#23d023;font-weight:bold">ChillFre4k:</span>
<span class="a t " style="left:590.2px;top:279px;font-size:7px;line-height:14px;color:#f0f0f0;">*kompilieren</span>
</div>
</body></html>
